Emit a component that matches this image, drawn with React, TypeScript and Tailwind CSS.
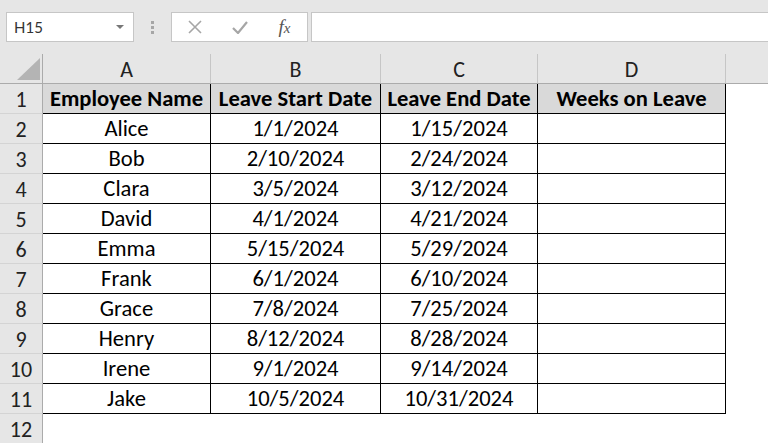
import React from "react";

const rows = [
  ["Alice", "1/1/2024", "1/15/2024"],
  ["Bob", "2/10/2024", "2/24/2024"],
  ["Clara", "3/5/2024", "3/12/2024"],
  ["David", "4/1/2024", "4/21/2024"],
  ["Emma", "5/15/2024", "5/29/2024"],
  ["Frank", "6/1/2024", "6/10/2024"],
  ["Grace", "7/8/2024", "7/25/2024"],
  ["Henry", "8/12/2024", "8/28/2024"],
  ["Irene", "9/1/2024", "9/14/2024"],
  ["Jake", "10/5/2024", "10/31/2024"],
];

const font = { fontFamily: "Carlito, Calibri, Lato, sans-serif" };

function RowHead({ n }: { n: number }) {
  return (
    <div className="w-[43px] shrink-0 h-full flex items-center justify-center pt-[1px] bg-[#e6e6e6] border-r border-r-[#ababab] border-b border-b-[#d4d4d4] text-[22px] text-[#222]">
      {n}
    </div>
  );
}

export default function App() {
  return (
    <div className="w-[768px] h-[443px] overflow-hidden bg-white" style={font}>
      {/* toolbar */}
      <div className="h-[54px] bg-[#e6e6e6] flex items-start pt-[12px] pl-[6px]">
        <div className="w-[128px] h-[30px] bg-white border border-[#c6c6c6] flex items-center justify-between pl-[7px] pr-[9px] text-[15px] text-[#333]" style={{ fontFamily: "Lato, sans-serif" }}>
          <span>H15</span>
          <svg width="8" height="5" viewBox="0 0 8 5"><path d="M0 0 L8 0 L4 4 Z" fill="#777" /></svg>
        </div>
        <div className="w-[37px] h-[30px] flex flex-col items-center justify-center gap-[2px]">
          <div className="w-[3px] h-[3px] bg-[#a6a6a6]" />
          <div className="w-[3px] h-[3px] bg-[#a6a6a6]" />
          <div className="w-[3px] h-[3px] bg-[#a6a6a6]" />
        </div>
        <div className="w-[137px] h-[30px] bg-white border border-[#c6c6c6] flex items-center">
          <div className="w-[45px] flex justify-center">
            <svg width="14" height="14" viewBox="0 0 14 14"><path d="M1 1 L13 13 M13 1 L1 13" stroke="#a6a6a6" strokeWidth="1.6" /></svg>
          </div>
          <div className="w-[45px] flex justify-center">
            <svg width="16" height="13" viewBox="0 0 16 13"><path d="M1 7 L6 12 L15 1" stroke="#a6a6a6" strokeWidth="2.2" fill="none" /></svg>
          </div>
          <div className="w-[45px] flex justify-center text-[19px] italic text-[#555]" style={{ fontFamily: "'Liberation Serif', serif" }}>
            <span>f<span className="text-[15px]">x</span></span>
          </div>
        </div>
        <div className="ml-[3px] flex-1 h-[30px] bg-white border border-[#c6c6c6] border-r-0" />
      </div>

      {/* column headers */}
      <div className="h-[30px] flex bg-[#e6e6e6] border-b border-b-[#ababab] text-[22px] text-[#222]">
        <div className="w-[43px] shrink-0 border-r border-r-[#ababab] relative">
          <svg className="absolute left-[17px] top-[4px]" width="23" height="22" viewBox="0 0 23 22"><path d="M23 0 L23 22 L0 22 Z" fill="#b4b4b4" /></svg>
        </div>
        {[
          ["A", "w-[168px]"],
          ["B", "w-[170px]"],
          ["C", "w-[157px]"],
          ["D", "w-[188px]"],
        ].map(([l, w]) => (
          <div key={l} className={`${w} shrink-0 flex items-center justify-center pt-[2px] border-r border-r-[#c6c6c6]`}>
            {l}
          </div>
        ))}
        <div className="flex-1" />
      </div>

      {/* header row */}
      <div className="h-[30px] flex text-[22.6px] text-black">
        <RowHead n={1} />
        <div className="w-[168px] shrink-0 bg-[#d9d9d9] border-r border-b border-black flex items-center justify-center pt-[1px] font-bold">Employee Name</div>
        <div className="w-[170px] shrink-0 bg-[#d9d9d9] border-r border-b border-black flex items-center justify-center pt-[1px] font-bold">Leave Start Date</div>
        <div className="w-[157px] shrink-0 bg-[#d9d9d9] border-r border-b border-black flex items-center justify-center pt-[1px] font-bold">Leave End Date</div>
        <div className="w-[188px] shrink-0 bg-[#d9d9d9] border-r border-b border-black flex items-center justify-center pt-[1px] font-bold">Weeks on Leave</div>
      </div>

      {rows.map((r, i) => (
        <div key={i} className="h-[30px] flex text-[22.6px] text-black">
          <RowHead n={i + 2} />
          <div className="w-[168px] shrink-0 border-r border-b border-black flex items-center justify-center pt-[1px]">{r[0]}</div>
          <div className="w-[170px] shrink-0 border-r border-b border-black flex items-center justify-center pt-[1px]">{r[1]}</div>
          <div className="w-[157px] shrink-0 border-r border-b border-black flex items-center justify-center pt-[1px]">{r[2]}</div>
          <div className="w-[188px] shrink-0 border-r border-b border-black" />
        </div>
      ))}

      <div className="h-[30px] flex">
        <RowHead n={12} />
      </div>
    </div>
  );
}
